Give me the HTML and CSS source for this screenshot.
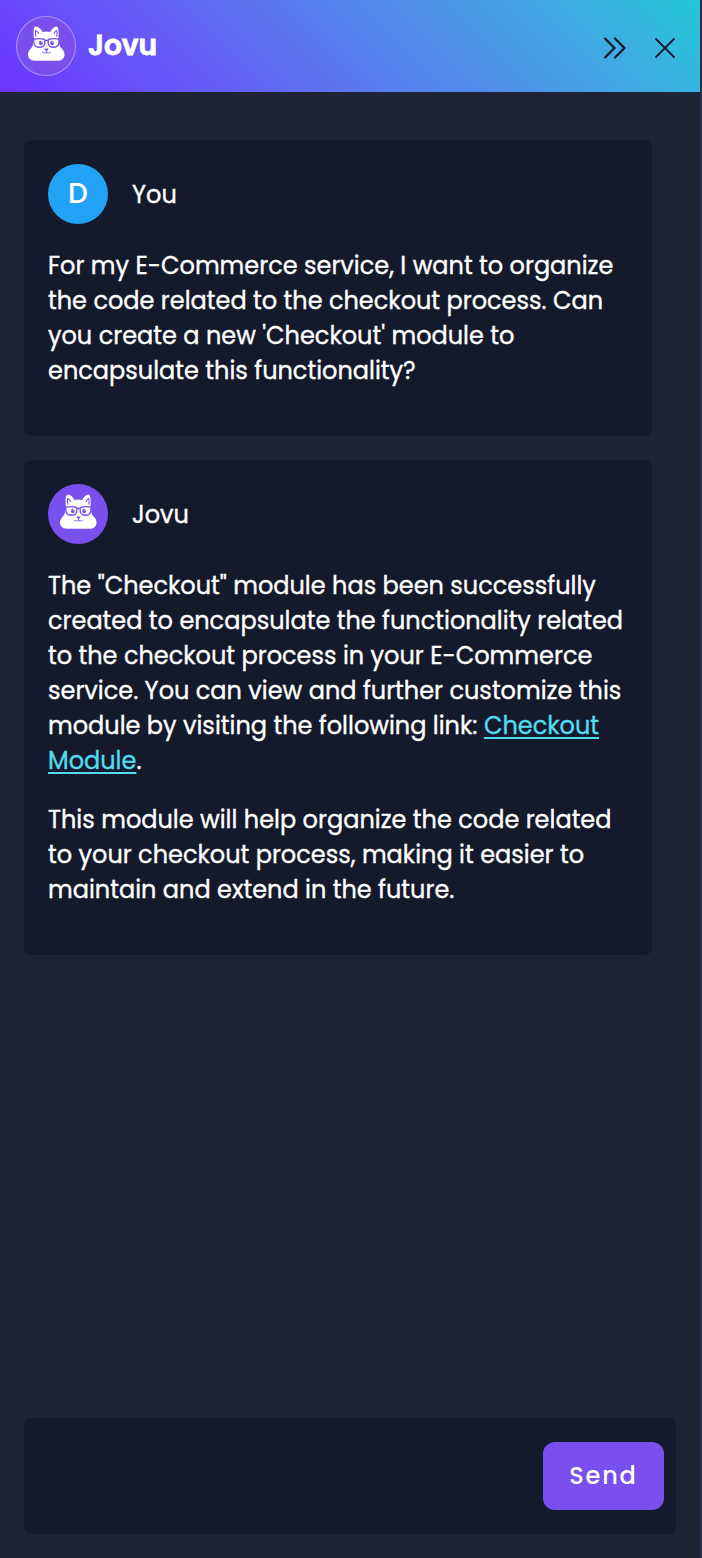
FILE: index.html
```html
<!DOCTYPE html>
<html lang="en">
<head>
<meta charset="utf-8">
<title>Jovu</title>
<link rel="stylesheet" href="styles.css">
</head>
<body>
<svg class="defs" width="0" height="0" aria-hidden="true">
  <symbol id="fox" viewBox="0 0 60 60">
    <path fill="#fff" d="M18 22.500C17.200 17 17.500 10.800 19.600 10.600C22.500 10.700 25.200 13.200 26.600 16Q30.500 15.200 34.200 16C35.500 13.200 38 10.700 40.500 10.600C42.600 10.800 43 17 42.400 22.500L43.600 29.500C44.500 32.500 48.500 33.500 48.500 38.500C48.500 42.500 45.500 44.800 41.500 44.800H18.500C14.500 44.500 12 42 12 38.500C12 34.500 15.500 33 16.700 29.500Z"/>
    <g fill="none" stroke="#7950ed" stroke-linecap="round" stroke-linejoin="round">
      <path stroke-width="1.100" d="M19.800 20.200Q18.900 16.800 19.700 14.600Q21.700 15.500 22.500 17.500M40.800 20.200Q41.600 16.800 40.700 14.600Q39 15.500 38.200 17.500"/>
      <path stroke-width="1.400" d="M17.600 23.200Q23 22.100 28 23.200Q29.200 24 28.700 27.300C28.300 30.400 27 31.200 23.400 31.200C19.600 31.200 18.500 30.200 18 27.300ZM43.200 23.200Q38 22.100 33 23.200Q31.800 24 32.300 27.300C32.700 30.400 34 31.200 37.600 31.200C41.200 31.200 42.300 30.200 42.800 27.300ZM29 24.600Q30.500 24 32 24.600"/>
      <path stroke-width=".9" d="M30.500 34.500V36.600M26.500 36.400Q28.700 37.900 30.500 36.600Q32.300 37.900 34.400 36.400"/>
    </g>
    <ellipse cx="24.900" cy="27" rx="1.900" ry="2.300" fill="#7950ed"/>
    <ellipse cx="36.100" cy="27" rx="1.900" ry="2.300" fill="#7950ed"/>
    <path fill="#fff" d="M25.200 25.300h1.200v1.200h-1.200zM36.400 25.300h1.200v1.200h-1.200z"/>
    <path fill="#7950ed" d="M28.400 32.400H32.600Q32.200 34.600 30.500 34.800Q28.800 34.600 28.400 32.400Z"/>
  </symbol>
</svg>
<main class="panel">
  <header class="header">
    <div class="avatar avatar-ring"><svg width="60" height="60"><use href="#fox"/></svg></div>
    <h1 class="title">Jovu</h1>
    <div class="actions">
      <svg width="24" height="24" viewBox="0 0 24 24"><path class="stroke bold" d="M2 2.500L11.500 12L2 21.500M12 2.500L21.500 12L12 21.500"/></svg>
      <svg width="24" height="24" viewBox="0 0 24 24"><path class="stroke" d="M3 3L21 21M21 3L3 21"/></svg>
    </div>
  </header>
  <section class="messages">
    <article class="card">
      <div class="author"><div class="avatar avatar-user">D</div><span>You</span></div>
      <p class="text">For my E-Commerce service, I want to organize the code related to the checkout process. Can you create a new 'Checkout' module to encapsulate this functionality?</p>
    </article>
    <article class="card">
      <div class="author"><div class="avatar"><svg width="60" height="60"><use href="#fox"/></svg></div><span>Jovu</span></div>
      <p class="text">The "Checkout" module has been successfully created to encapsulate the functionality related to the checkout process in your E-Commerce service. You can view and further customize this module by visiting the following link: <a class="link" href="#">Checkout Module</a>.</p>
      <p class="text">This module will help organize the code related to your checkout process, making it easier to maintain and extend in the future.</p>
    </article>
  </section>
  <footer class="composer"><button class="send">Send</button></footer>
</main>
</body>
</html>
```
FILE: styles.css
```css
* { box-sizing: border-box; }
body { margin: 0; background: #1f2336; color: #fff; font-family: Poppins, Inter, sans-serif; -webkit-text-stroke: 0.35px currentColor; }
.defs { position: absolute; }
.panel { height: 1558px; display: flex; flex-direction: column; border-right: 2px solid #2b2f4b; }
.header { height: 92px; flex: none; display: flex; align-items: center; padding: 0 23px 0 16px; background: linear-gradient(45deg, #6c34ff 0%, #6852fa 19%, #6460f5 30%, #577fee 50%, #4e92e8 65%, #39b3e0 87%, #22c7d8 100%); }
.avatar { width: 60px; height: 60px; flex: none; border-radius: 50%; background: #7950ed; display: flex; align-items: center; justify-content: center; }
.avatar svg { flex: none; display: block; }
.avatar-ring { box-shadow: inset 0 0 0 1px #a993f5; }
.avatar-user { background: #22a2f5; font-size: 28px; font-weight: 500; -webkit-text-stroke: 0; }
.title { margin: 0 0 0 12px; font-size: 28px; line-height: 36px; font-weight: 600; -webkit-text-stroke: 0.8px currentColor; }
.actions { margin: 4px 0 0 auto; display: flex; gap: 26px; }
.stroke { fill: none; stroke: #15192a; stroke-width: 1.8; stroke-linecap: round; }
.bold { stroke-width: 2.2; }
.messages { flex: 1; padding: 48px 48px 0 24px; display: flex; flex-direction: column; gap: 24px; }
.card { background: #14192b; border-radius: 8px; padding: 24px 24px 48px; }
.author { display: flex; align-items: center; gap: 24px; margin-bottom: 24px; font-size: 24px; }
.text { margin: 0; font-size: 24px; line-height: 35px; }
.text + .text { margin-top: 24px; }
.link { color: #53dbee; text-decoration: underline; text-decoration-thickness: 2px; text-underline-offset: 3px; }
.composer { height: 116px; flex: none; margin: 0 24px 24px; padding: 0 12px; display: flex; align-items: center; justify-content: flex-end; background: #14192b; border-radius: 8px; }
.send { width: 121px; height: 68px; border: 0; border-radius: 12px; padding: 0 0 2px; background: #7950ed; color: #fff; font: 500 24px Poppins, Inter, sans-serif; letter-spacing: 1.8px; -webkit-text-stroke: 0; }
```
